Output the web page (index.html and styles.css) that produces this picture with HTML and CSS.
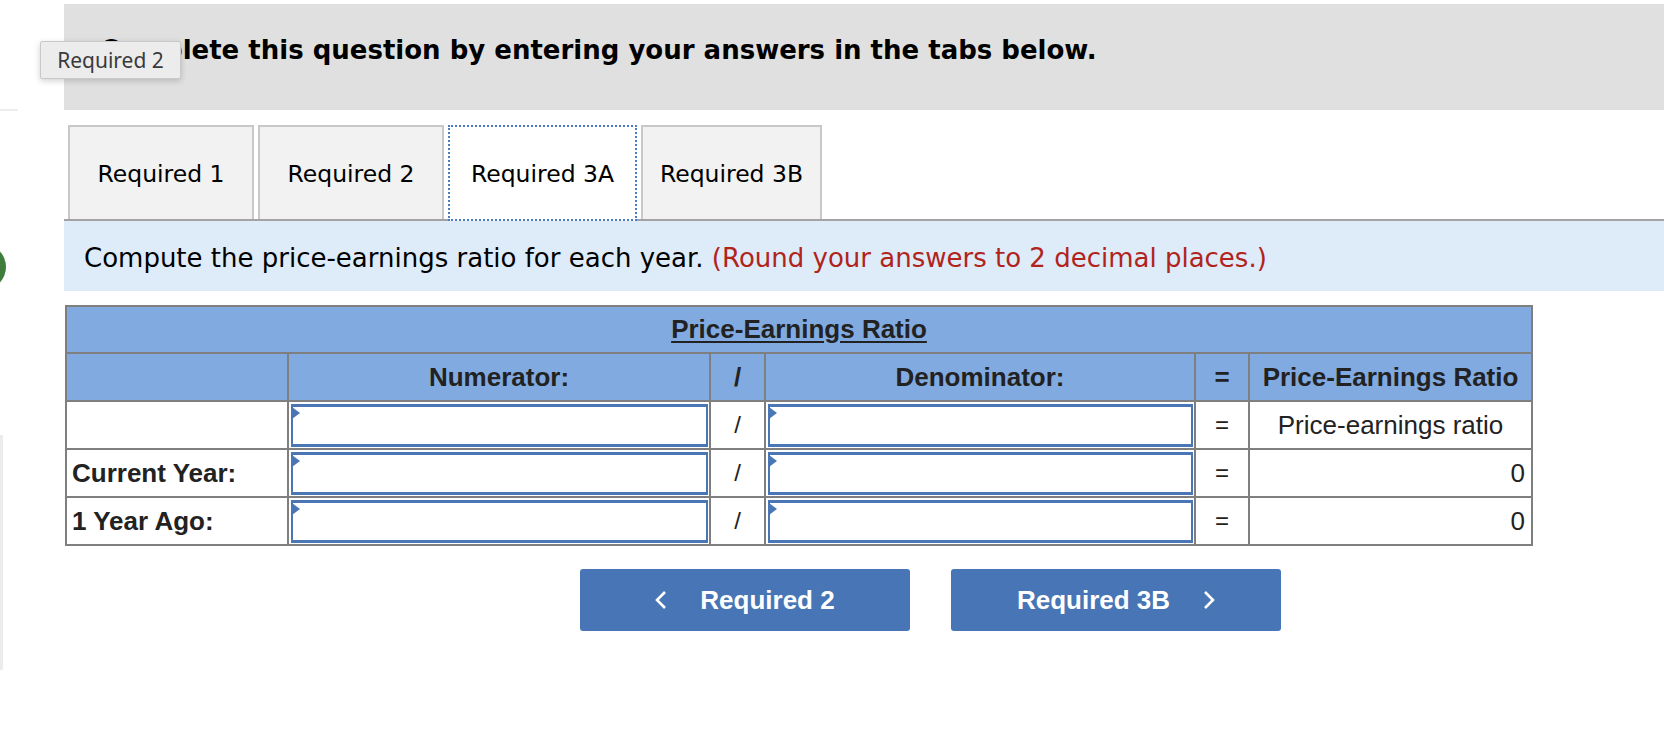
FILE: index.html
```html
<!DOCTYPE html>
<html>
<head>
<meta charset="utf-8">
<link rel="stylesheet" href="styles.css">
</head>
<body>
<div class="side-line-top"></div>
<div class="side-arc"></div>
<div class="side-line-left"></div>
<div class="page">
  <div class="question-head">Complete this question by entering your answers in the tabs below.</div>
  <div class="tabs">
    <div class="tab tab-1">Required 1</div>
    <div class="tab tab-2">Required 2</div>
    <div class="tab tab-3a active">Required 3A</div>
    <div class="tab tab-3b">Required 3B</div>
  </div>
  <div class="instruction">Compute the price-earnings ratio for each year. <span class="red">(Round your answers to 2 decimal places.)</span></div>
  <table class="grid">
    <colgroup>
      <col class="c-label"><col class="c-num"><col class="c-op"><col class="c-den"><col class="c-eq"><col class="c-res">
    </colgroup>
    <tr class="title-row"><th colspan="6"><span class="title">Price-Earnings Ratio</span></th></tr>
    <tr class="head-row">
      <th></th><th>Numerator:</th><th>/</th><th>Denominator:</th><th>=</th><th>Price-Earnings Ratio</th>
    </tr>
    <tr>
      <td></td>
      <td class="in"><div class="box"></div></td>
      <td class="op">/</td>
      <td class="in"><div class="box"></div></td>
      <td class="op">=</td>
      <td class="res-label">Price-earnings ratio</td>
    </tr>
    <tr>
      <td class="label">Current Year:</td>
      <td class="in"><div class="box"></div></td>
      <td class="op">/</td>
      <td class="in"><div class="box"></div></td>
      <td class="op">=</td>
      <td class="res">0</td>
    </tr>
    <tr>
      <td class="label">1 Year Ago:</td>
      <td class="in"><div class="box"></div></td>
      <td class="op">/</td>
      <td class="in"><div class="box"></div></td>
      <td class="op">=</td>
      <td class="res">0</td>
    </tr>
  </table>
  <div class="nav">
    <div class="btn btn-prev">
      <svg class="chev" width="12" height="20" viewBox="0 0 12 20"><path d="M10 2 L2 10 L10 18" fill="none" stroke="#fff" stroke-width="2.6"/></svg>
      <span>Required 2</span>
    </div>
    <div class="btn btn-next">
      <span>Required 3B</span>
      <svg class="chev" width="12" height="20" viewBox="0 0 12 20"><path d="M2 2 L10 10 L2 18" fill="none" stroke="#fff" stroke-width="2.6"/></svg>
    </div>
  </div>
</div>
<div class="tooltip">Required 2</div>
</body>
</html>
```

FILE: styles.css
```css
html, body {
  margin: 0;
  padding: 0;
  background: #fff;
  width: 1664px;
  height: 756px;
  overflow: hidden;
}
body {
  position: relative;
}
.page {
  margin-left: 64px;
  padding-top: 4px;
  width: 1700px;
}
.question-head {
  background: #e0e0e0;
  height: 106px;
  box-sizing: border-box;
  padding: 31px 0 0 36px;
  font-family: "DejaVu Sans", Verdana, sans-serif;
  font-weight: bold;
  font-size: 26px;
  color: #000;
  line-height: 30px;
}
.tabs {
  display: flex;
  gap: 4px;
  margin-top: 15px;
  padding-left: 4px;
  border-bottom: 2px solid #a3a3a3;
  height: 94px;
}
.tab {
  box-sizing: border-box;
  height: 94px;
  background: #f2f2f2;
  border: 2px solid #c8c8c8;
  border-bottom: none;
  display: flex;
  align-items: center;
  justify-content: center;
  font-family: "DejaVu Sans", Verdana, sans-serif;
  font-size: 23.5px;
  color: #000;
  padding-top: 2px;
}
.tab-1, .tab-2 { width: 186px; }
.tab-3a { width: 189px; }
.tab-3b { width: 181px; }
.tab.active {
  background: #fff;
  border: 2px dotted #4a7cc4;
  height: 96px;
  margin-bottom: -2px;
}
.instruction {
  background: #deebf8;
  height: 70px;
  box-sizing: border-box;
  padding: 22px 0 0 20px;
  font-family: "DejaVu Sans", Verdana, sans-serif;
  font-size: 26px;
  color: #000;
  line-height: 30px;
}
.red { color: #b0241c; }
.grid {
  margin: 14px 0 0 1px;
  border-collapse: collapse;
  border: 2px solid #7f7f7f;
  font-family: "Liberation Sans", Arial, sans-serif;
  font-size: 26px;
  color: #222;
  table-layout: fixed;
  width: 1466px;
}
.c-label { width: 222px; }
.c-num { width: 422px; }
.c-op { width: 55px; }
.c-den { width: 430px; }
.c-eq { width: 54px; }
.c-res { width: 283px; }
.grid th, .grid td {
  border: 2px solid #7f7f7f;
  padding: 0;
}
.grid th {
  background: #81aae0;
  font-weight: bold;
  text-align: center;
}
.title-row th { height: 45px; }
.title { text-decoration: underline; text-underline-offset: 3px; }
.head-row th { height: 46px; }
.grid td { height: 46px; background: #fff; }
.grid td.in { padding: 0; vertical-align: middle; }
.box {
  position: relative;
  box-sizing: border-box;
  height: 43px;
  margin: 0 1px 0 2px;
  border: 2px solid #4a76b6;
  border-top-width: 3px;
  border-bottom-width: 3px;
  background: #fff;
}
.box::before {
  content: "";
  position: absolute;
  left: -1px;
  top: 0;
  border-left: 8px solid #4a76b6;
  border-top: 6px solid transparent;
  border-bottom: 6px solid transparent;
}
.op { text-align: center; font-size: 24px; }
.label { font-weight: bold; padding-left: 5px !important; }
.res-label { text-align: center; }
.res { text-align: right; padding-right: 6px !important; }
.nav {
  display: flex;
  gap: 41px;
  margin: 23px 0 0 516px;
}
.btn {
  box-sizing: border-box;
  width: 330px;
  height: 62px;
  background: #4775b5;
  border-radius: 3px;
  display: flex;
  align-items: center;
  justify-content: center;
  gap: 33px;
  color: #fff;
  font-family: "Liberation Sans", Arial, sans-serif;
  font-weight: bold;
  font-size: 26px;
}
.tooltip {
  position: absolute;
  left: 40px;
  top: 41px;
  width: 141px;
  height: 38px;
  box-sizing: border-box;
  background: #ececed;
  border: 1px solid #c9c9c9;
  border-radius: 2px;
  box-shadow: 0 2px 6px rgba(0,0,0,0.18);
  font-family: "Noto Sans", "Open Sans", sans-serif;
  font-size: 21px;
  color: #3a3a3a;
  display: flex;
  align-items: center;
  justify-content: center;
}
.side-line-top {
  position: absolute;
  left: 0;
  top: 109px;
  width: 18px;
  height: 2px;
  background: #ececec;
}
.side-arc {
  position: absolute;
  left: -40px;
  top: 244px;
  width: 46px;
  height: 46px;
  border-radius: 50%;
  background: #3f7d3c;
}
.side-line-left {
  position: absolute;
  left: 0;
  top: 435px;
  width: 3px;
  height: 235px;
  background: #ececec;
}
```
